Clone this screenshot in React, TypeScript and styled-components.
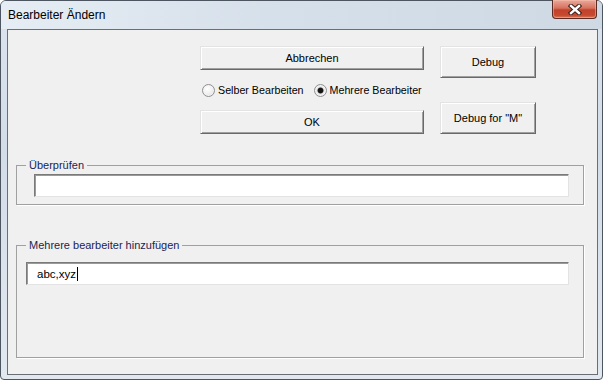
import React from 'react';
import styled, { createGlobalStyle } from 'styled-components';

const GlobalStyle = createGlobalStyle`
  html, body {
    margin: 0;
    padding: 0;
    background: #ffffff;
    overflow: hidden;
  }
  * {
    box-sizing: border-box;
  }
`;

const Window = styled.div`
  width: 603px;
  height: 380px;
  display: flex;
  flex-direction: column;
  border: 1px solid #4d5560;
  border-radius: 6px 6px 4px 4px;
  background: linear-gradient(180deg, #dbe4ee 0%, #d3dde8 40%, #e2e8ef 100%);
  font-family: 'Liberation Sans', Arial, sans-serif;
`;

const TitleBar = styled.div`
  height: 28px;
  display: flex;
  align-items: center;
  padding-left: 7px;
  background: linear-gradient(90deg, #e6edf4 0%, #d6e0ea 45%, #cfd9e4 100%);
  border-radius: 5px 5px 0 0;
`;

const Title = styled.span`
  font-size: 12px;
  color: #000;
`;

const CloseButton = styled.div`
  margin-left: auto;
  margin-right: 5px;
  align-self: flex-start;
  margin-top: -1px;
  width: 45px;
  height: 19px;
  display: flex;
  align-items: center;
  justify-content: center;
  border: 1px solid #5a2c24;
  border-top: none;
  border-radius: 0 0 4px 4px;
  background: linear-gradient(180deg, #e9a99b 0%, #d7725f 45%, #c2412a 55%, #c64a2f 85%, #d97a5e 100%);
  box-shadow: inset 0 0 0 1px rgba(255, 200, 180, 0.45);
`;

const Client = styled.div`
  flex: 1;
  margin: 0 4px 4px 6px;
  border: 1px solid #6b6e72;
  background: #f0f0f0;
  display: flex;
  flex-direction: column;
  font-size: 11px;
  color: #000;
`;

const TopArea = styled.div`
  display: flex;
  gap: 16px;
  margin: 16px 0 0 192px;
  height: 88px;
`;

const LeftColumn = styled.div`
  width: 224px;
  display: flex;
  flex-direction: column;
`;

const RightColumn = styled.div`
  width: 96px;
  display: flex;
  flex-direction: column;
  justify-content: space-between;
`;

const Button = styled.div<{ $tall?: boolean }>`
  height: ${p => (p.$tall ? '32px' : '24px')};
  display: flex;
  align-items: center;
  justify-content: center;
  background: #f0f0f0;
  border-top: 1px solid #e3e3e3;
  border-left: 1px solid #e3e3e3;
  border-right: 1px solid #696969;
  border-bottom: 1px solid #696969;
  box-shadow: inset 1px 1px 0 #ffffff, inset -1px -1px 0 #a0a0a0;
  font-size: 11px;
`;

const RadioRow = styled.div`
  flex: 1;
  display: flex;
  align-items: center;
  padding-left: 2px;
  white-space: nowrap;
  font-size: 10.7px;
`;

const RadioLabel = styled.label`
  display: flex;
  align-items: center;
  flex-shrink: 0;
  gap: 3px;
  margin-right: 10px;
`;

const RadioDot = styled.span<{ $checked?: boolean }>`
  width: 13px;
  height: 13px;
  flex-shrink: 0;
  border-radius: 50%;
  border: 1px solid #8e8f8f;
  background: ${p =>
    p.$checked
      ? 'radial-gradient(circle, #141414 0 2.2px, #5a5a5a 2.8px, #e6e6e6 3.4px, #f6f6f6 100%)'
      : 'radial-gradient(circle at 40% 35%, #ffffff 0%, #f2f2f2 45%, #d6d6d6 100%)'};
  box-shadow: inset 0 0 0 1px #f4f4f4;
`;

const Frame = styled.fieldset<{ $gap: number; $bottom: number }>`
  margin: ${p => p.$gap}px 13px 0 8px;
  padding: 0 0 ${p => p.$bottom}px 9px;
  min-width: 0;
  border: 1px solid #a0a0a0;
  box-shadow: 1px 1px 0 #ffffff;
`;

const Caption = styled.legend`
  padding: 0 3px;
  font-size: 11px;
  line-height: 14px;
  color: #1c2352;
`;

const TextBox = styled.div<{ $width: number; $indent: number; $top: number }>`
  width: ${p => p.$width}px;
  height: 23px;
  margin: ${p => p.$top}px 0 0 ${p => p.$indent}px;
  background: #ffffff;
  border-top: 1px solid #7a7a7a;
  border-left: 1px solid #7a7a7a;
  border-right: 1px solid #e3e3e3;
  border-bottom: 1px solid #e3e3e3;
  box-shadow: inset 1px 1px 0 #9a9a9a;
  display: flex;
  align-items: center;
  padding-left: 10px;
  font-size: 11.5px;
`;

const Caret = styled.span`
  display: inline-block;
  width: 1px;
  height: 14px;
  margin-left: 1px;
  background: #000;
`;

const CloseIcon = () => (
  <svg width="14" height="11" viewBox="0 0 14 11">
    <path d="M3 2 L11 9 M11 2 L3 9" stroke="#3a1f1a" strokeWidth="4.4" strokeLinecap="square" />
    <path d="M3 2 L11 9 M11 2 L3 9" stroke="#ffffff" strokeWidth="2.4" strokeLinecap="square" />
  </svg>
);

const App: React.FC = () => {
  return (
    <>
      <GlobalStyle />
      <Window>
        <TitleBar>
          <Title>Bearbeiter Ändern</Title>
          <CloseButton>
            <CloseIcon />
          </CloseButton>
        </TitleBar>
        <Client>
          <TopArea>
            <LeftColumn>
              <Button>Abbrechen</Button>
              <RadioRow>
                <RadioLabel>
                  <RadioDot />
                  Selber Bearbeiten
                </RadioLabel>
                <RadioLabel>
                  <RadioDot $checked />
                  Mehrere Bearbeiter
                </RadioLabel>
              </RadioRow>
              <Button>OK</Button>
            </LeftColumn>
            <RightColumn>
              <Button $tall>Debug</Button>
              <Button $tall>Debug for "M"</Button>
            </RightColumn>
          </TopArea>

          <Frame $gap={24} $bottom={7}>
            <Caption>Überprüfen</Caption>
            <TextBox $width={535} $indent={8} $top={2} />
          </Frame>

          <Frame $gap={33} $bottom={72}>
            <Caption>Mehrere bearbeiter hinzufügen</Caption>
            <TextBox $width={543} $indent={0} $top={10}>
              abc,xyz
              <Caret />
            </TextBox>
          </Frame>
        </Client>
      </Window>
    </>
  );
};

export default App;
